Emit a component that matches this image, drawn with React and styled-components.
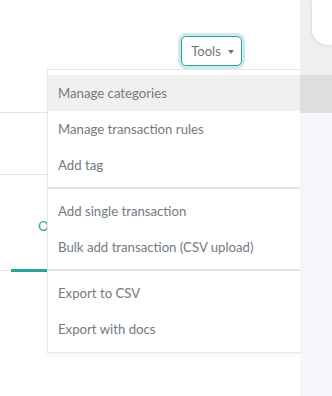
import React from "react";
import styled, { createGlobalStyle } from "styled-components";

const Global = createGlobalStyle`
  html, body { margin: 0; padding: 0; background: #ffffff; }
  body { font-family: Lato, "Open Sans", Arial, sans-serif; }
  * { box-sizing: border-box; }
`;

const Page = styled.div`
  width: 332px;
  height: 396px;
  display: flex;
  overflow: hidden;
`;

const Main = styled.div`
  position: relative;
  width: 300px;
  height: 396px;
  background: #ffffff;
  overflow: hidden;
  display: flex;
  flex-direction: column;
`;

const Toolbar = styled.div`
  height: 113px;
  display: flex;
  justify-content: flex-end;
  align-items: flex-start;
  padding: 36px 58px 0 0;
  border-bottom: 1px solid #e4e4e4;
`;

const ToolsButton = styled.button`
  width: 61px;
  height: 30px;
  display: flex;
  align-items: center;
  justify-content: center;
  gap: 7px;
  padding: 0 0 0 2px;
  background: #ffffff;
  border: 1.5px solid #2aa59b;
  border-radius: 5px;
  box-shadow: 0 0 0 3px rgba(42, 165, 155, 0.22);
  font-family: Lato, "Open Sans", Arial, sans-serif;
  font-size: 13px;
  color: #6d747c;
  cursor: pointer;
`;

const Caret = styled.span`
  width: 0;
  height: 0;
  border-left: 3px solid transparent;
  border-right: 3px solid transparent;
  border-top: 4px solid #6d747c;
  margin-top: 1px;
`;

const Section = styled.div`
  height: 62px;
  border-bottom: 1px solid #e4e4e4;
`;

const Tabs = styled.div`
  height: 96px;
  display: flex;
  align-items: flex-end;
  padding-left: 11px;
  border-bottom: 1px solid #e4e4e4;
`;

const Tab = styled.div`
  padding: 0 0 35px 27px;
  width: 80px;
  margin-bottom: -2px;
  line-height: 16px;
  font-size: 13.5px;
  color: ${(p) => (p.$active ? "#2aa59b" : "#6d747c")};
  border-bottom: 3px solid ${(p) => (p.$active ? "#2aa59b" : "transparent")};
`;

const Menu = styled.div`
  position: absolute;
  left: 47px;
  top: 69px;
  width: 270px;
  padding: 5px 0;
  background: #ffffff;
  border: 1px solid #e8e8e8;
  border-right: none;
  box-shadow: 0 2px 4px rgba(0, 0, 0, 0.04);
`;

const Item = styled.div`
  height: 36px;
  display: flex;
  align-items: center;
  padding-left: 10px;
  font-size: 13.2px;
  color: #737a83;
  background: ${(p) => (p.$active ? "#f0f0f0" : "transparent")};
  white-space: nowrap;
`;

const Divider = styled.div`
  height: 2px;
  margin: 4px 0;
  background: #e3e3e3;
`;

const Strip = styled.div`
  width: 32px;
  height: 396px;
  background: #f4f6fb;
  display: flex;
  flex-direction: column;
`;

const StripTop = styled.div`
  height: 75px;
  background: #efeff1;
  display: flex;
  padding-left: 12px;
`;

const Card = styled.div`
  flex: 1;
  height: 45px;
  background: #ffffff;
  border-bottom-left-radius: 16px;
  box-shadow: -1px 1px 3px rgba(0, 0, 0, 0.08);
`;

const StripBand = styled.div`
  height: 38px;
  background: #dedee0;
`;

const items = [
  ["Manage categories", true],
  ["Manage transaction rules"],
  ["Add tag"],
  "div",
  ["Add single transaction"],
  ["Bulk add transaction (CSV upload)"],
  "div",
  ["Export to CSV"],
  ["Export with docs"],
];

export default function App() {
  return (
    <>
      <Global />
      <Page>
        <Main>
          <Toolbar>
            <ToolsButton>
              Tools
              <Caret />
            </ToolsButton>
          </Toolbar>
          <Section />
          <Tabs>
            <Tab $active>Overview</Tab>
          </Tabs>
          <Menu>
            {items.map((it, i) =>
              it === "div" ? (
                <Divider key={i} />
              ) : (
                <Item key={i} $active={it[1]}>
                  {it[0]}
                </Item>
              )
            )}
          </Menu>
        </Main>
        <Strip>
          <StripTop>
            <Card />
          </StripTop>
          <StripBand />
        </Strip>
      </Page>
    </>
  );
}
